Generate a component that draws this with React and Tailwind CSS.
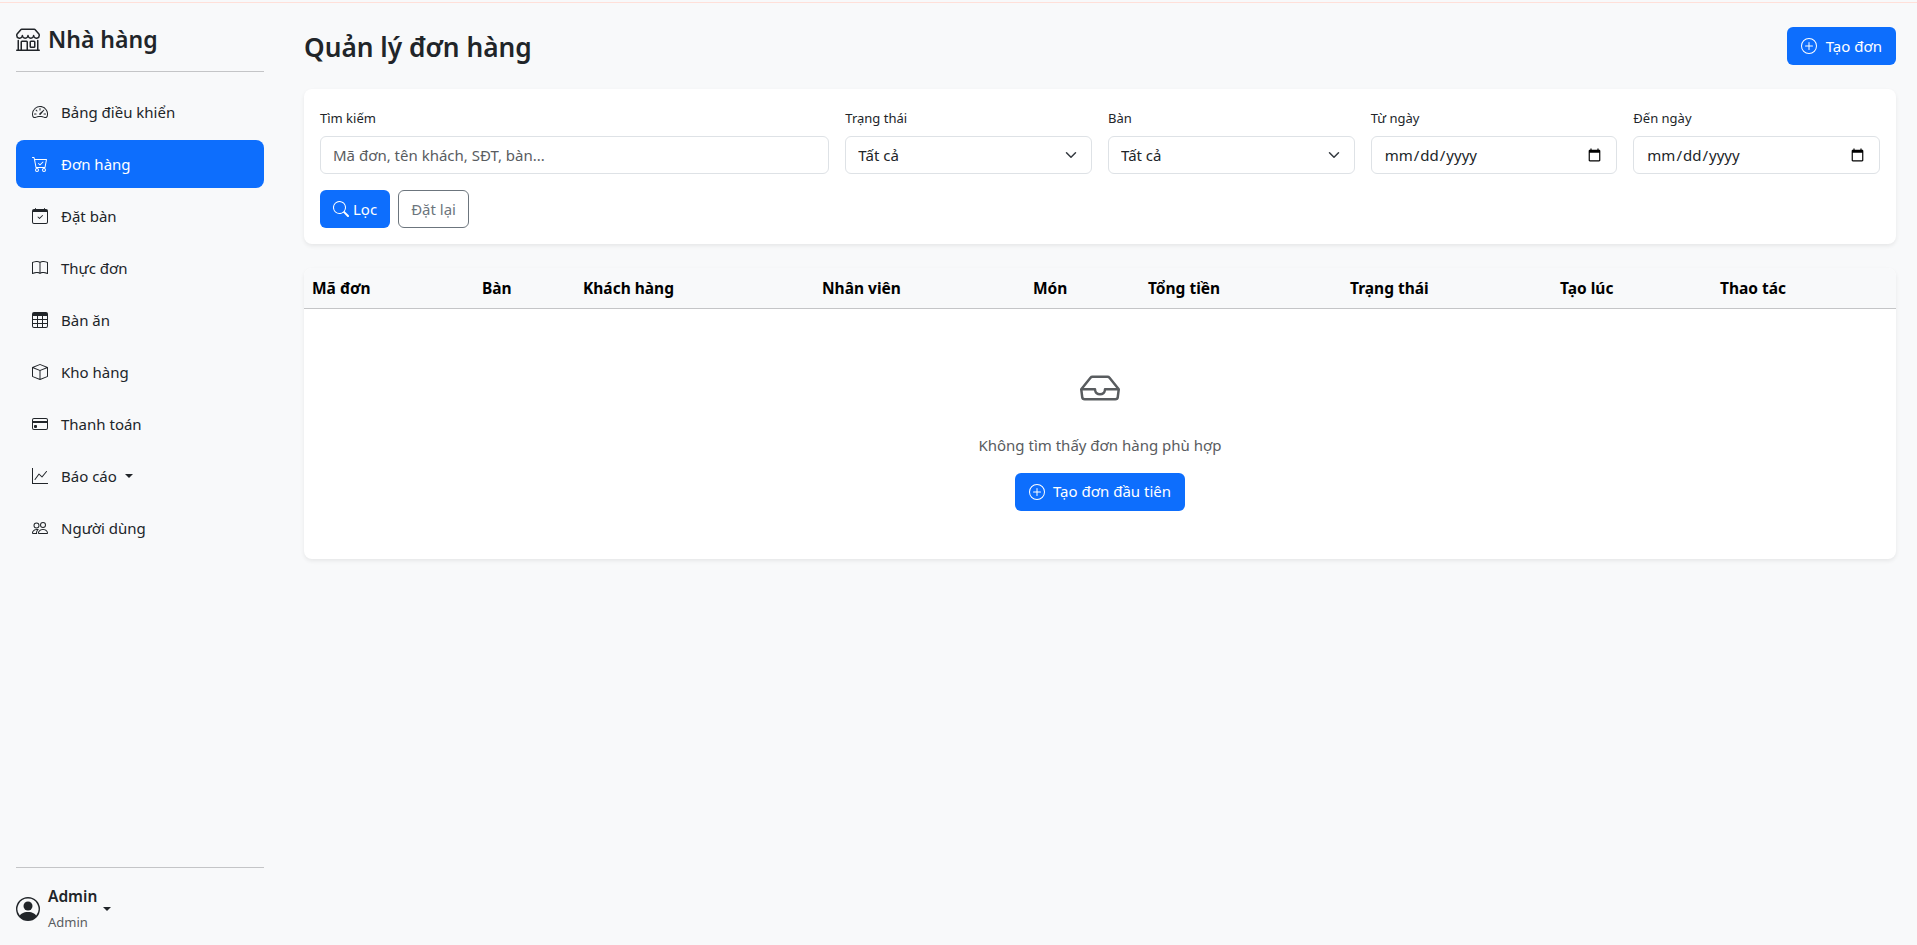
import {
  BsBook,
  BsBox,
  BsCalendarCheck,
  BsCartCheck,
  BsCreditCard,
  BsGraphUp,
  BsInbox,
  BsPeople,
  BsPersonCircle,
  BsPlusCircle,
  BsSearch,
  BsShop,
  BsSpeedometer2,
  BsTable,
} from "react-icons/bs"

const navItems = [
  { label: "Bảng điều khiển", icon: BsSpeedometer2 },
  { label: "Đơn hàng", icon: BsCartCheck, active: true },
  { label: "Đặt bàn", icon: BsCalendarCheck },
  { label: "Thực đơn", icon: BsBook },
  { label: "Bàn ăn", icon: BsTable },
  { label: "Kho hàng", icon: BsBox },
  { label: "Thanh toán", icon: BsCreditCard },
  { label: "Báo cáo", icon: BsGraphUp, caret: true },
  { label: "Người dùng", icon: BsPeople },
]

const columns = [
  { label: "Mã đơn", width: "w-[170px]" },
  { label: "Bàn", width: "w-[101px]" },
  { label: "Khách hàng", width: "w-[239px]" },
  { label: "Nhân viên", width: "w-[211px]" },
  { label: "Món", width: "w-[115px]" },
  { label: "Tổng tiền", width: "w-[202px]" },
  { label: "Trạng thái", width: "w-[210px]" },
  { label: "Tạo lúc", width: "w-[160px]" },
  { label: "Thao tác", width: "w-[184px]" },
]

function Caret() {
  return <span className="inline-block w-0 h-0 border-x-[4.8px] border-x-transparent border-t-[4.8px] border-t-[#212529]" />
}

function Sidebar() {
  return (
    <aside className="w-[280px] shrink-0 h-[942px] px-4 pt-4 pb-3 flex flex-col">
      <div className="flex items-center gap-2 h-10 text-[#212529]">
        <BsShop className="text-2xl" />
        <span className="text-[23px] font-semibold">Nhà hàng</span>
      </div>
      <hr className="border-t border-[#c4c5c7] mt-3" />
      <nav className="flex flex-col gap-1 mt-4">
        {navItems.map((item) => (
          <a
            key={item.label}
            className={
              item.active
                ? "flex items-center h-12 px-4 rounded-lg bg-[#0d6efd] text-white"
                : "flex items-center h-12 px-4 rounded-lg text-[#212529]"
            }
          >
            <item.icon className="text-base mr-[13px] shrink-0" />
            <span>{item.label}</span>
            {item.caret && <span className="ml-2 flex"><Caret /></span>}
          </a>
        ))}
      </nav>
      <div className="mt-auto">
        <hr className="border-t border-[#c4c5c7]" />
        <div className="flex items-center mt-4 text-[#212529]">
          <BsPersonCircle className="text-2xl mr-2" />
          <div className="flex flex-col">
            <span className="text-[15.5px] font-semibold leading-6">Admin</span>
            <span className="text-[13px] text-[#595c5f] leading-[21px] mt-1">Admin</span>
          </div>
          <span className="ml-[6px] flex"><Caret /></span>
        </div>
      </div>
    </aside>
  )
}

function Field({ label, span, children }) {
  return (
    <div className={span}>
      <label className="block text-[13px] pt-px leading-[21px] mb-[7px] text-[#212529]">{label}</label>
      {children}
    </div>
  )
}

function SelectBox({ value }) {
  return (
    <div className="relative">
      <select className="w-full h-[38px] pl-3 pr-9 appearance-none bg-white border border-[#dee2e6] rounded-md text-[#212529]">
        <option>{value}</option>
      </select>
      <svg viewBox="0 0 16 16" className="absolute right-[15px] top-[13px] w-3 h-3 pointer-events-none" fill="none">
        <path d="m2 5 6 6 6-6" stroke="#343a40" strokeWidth="2" strokeLinecap="round" strokeLinejoin="round" />
      </svg>
    </div>
  )
}

function Filters() {
  return (
    <section className="bg-white rounded-lg shadow-[0_2px_4px_rgba(0,0,0,0.075)] p-4 pt-[18px] grid grid-cols-12 gap-4">
      <Field label="Tìm kiếm" span="col-span-4">
        <input
          placeholder="Mã đơn, tên khách, SĐT, bàn..."
          className="w-full h-[38px] px-3 bg-white border border-[#dee2e6] rounded-md text-[#212529] placeholder:text-[#595c5f]"
        />
      </Field>
      <Field label="Trạng thái" span="col-span-2">
        <SelectBox value="Tất cả" />
      </Field>
      <Field label="Bàn" span="col-span-2">
        <SelectBox value="Tất cả" />
      </Field>
      <Field label="Từ ngày" span="col-span-2">
        <input type="date" className="w-full h-[38px] px-3 bg-white border border-[#dee2e6] rounded-md text-[#212529]" />
      </Field>
      <Field label="Đến ngày" span="col-span-2">
        <input type="date" className="w-full h-[38px] px-3 bg-white border border-[#dee2e6] rounded-md text-[#212529]" />
      </Field>
      <div className="col-span-12 flex gap-2">
        <button className="h-[38px] px-[13px] flex items-center gap-1 bg-[#0d6efd] text-white rounded-md">
          <BsSearch className="text-base" />
          Lọc
        </button>
        <button className="h-[38px] px-3 border border-[#6c757d] text-[#6c757d] rounded-md">Đặt lại</button>
      </div>
    </section>
  )
}

function OrdersTable() {
  return (
    <section className="bg-white rounded-lg shadow-[0_2px_4px_rgba(0,0,0,0.075)] mt-6 overflow-hidden">
      <table className="w-full table-fixed">
        <thead>
          <tr className="bg-[#f8f9fa] border-b border-[#c4c5c7]">
            {columns.map((col) => (
              <th key={col.label} className={`${col.width} h-10 px-2 pt-[2px] text-left text-[15.5px] font-bold text-black`}>
                {col.label}
              </th>
            ))}
          </tr>
        </thead>
        <tbody>
          <tr>
            <td colSpan={9} className="pt-[59px] pb-12 text-center">
              <BsInbox className="text-[40px] text-[#595c5f] mx-auto" />
              <p className="text-[#595c5f] leading-6 mt-[25px]">Không tìm thấy đơn hàng phù hợp</p>
              <button className="mt-4 mx-auto h-[38px] px-[14px] flex items-center gap-2 bg-[#0d6efd] text-white rounded-md">
                <BsPlusCircle className="text-base" />
                Tạo đơn đầu tiên
              </button>
            </td>
          </tr>
        </tbody>
      </table>
    </section>
  )
}

export default function App() {
  return (
    <div className="min-h-screen bg-[#f8f9fa] font-['Noto_Sans',sans-serif] text-[15px] text-[#212529]">
      <div className="h-[3px] border-b border-[#ffe0d9]" />
      <div className="flex">
        <Sidebar />
        <main className="flex-1 pl-6 pr-[21px] pt-6">
          <header className="flex items-center justify-between h-[38px] mb-6">
            <h1 className="text-[26.25px] font-semibold pt-[3px]">Quản lý đơn hàng</h1>
            <button className="h-[38px] px-[14px] flex items-center gap-[9px] bg-[#0d6efd] text-white rounded-md">
              <BsPlusCircle className="text-base" />
              Tạo đơn
            </button>
          </header>
          <Filters />
          <OrdersTable />
        </main>
      </div>
    </div>
  )
}
